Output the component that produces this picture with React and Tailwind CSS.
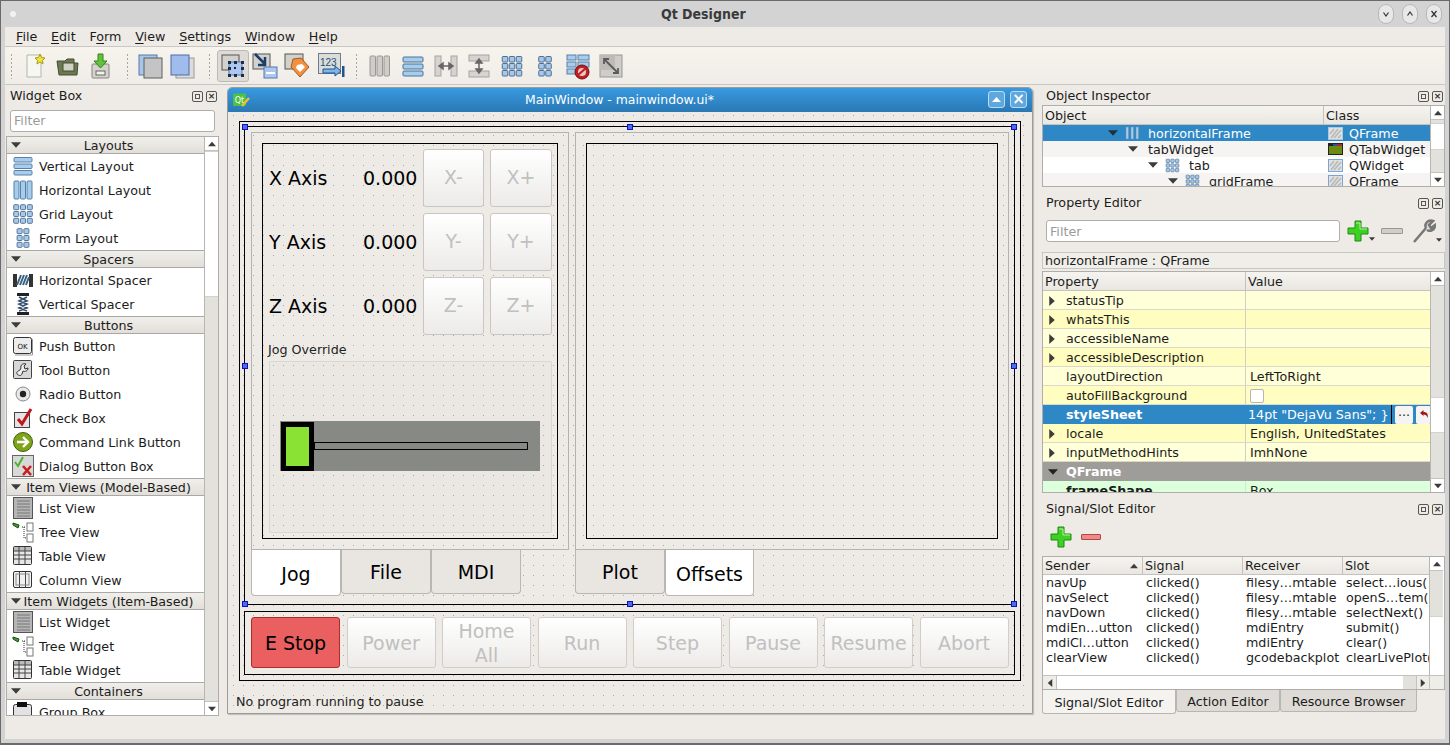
import React from 'react'

const DOTS = "bg-[radial-gradient(circle_at_0.5px_0.5px,#a8a8a8_0.6px,transparent_0.6px)] bg-[length:10px_10px]"

const Tri = ({ dir = 'down', color = '#3c3c3c', size = 9, className = '' }) => {
  const pts = { down: '0,2 9,2 4.5,7', up: '0,7 9,7 4.5,2', right: '2,0 7,4.5 2,9', left: '7,0 2,4.5 7,9' }
  return (
    <svg width={size} height={size} viewBox="0 0 9 9" className={`shrink-0 ${className}`}>
      <polygon points={pts[dir]} fill={color} />
    </svg>
  )
}

// layout style icons
const Bars = ({ vertical, size = 22, fill = '#a5cdf0', stroke = '#5b7fa5' }) => (
  <svg width={size} height={size} viewBox="0 0 22 22" className="shrink-0">
    {[0, 1, 2].map((i) =>
      vertical
        ? <rect key={i} x={2 + i * 6.5} y="2" width="5" height="18" rx="1" fill={fill} stroke={stroke} />
        : <rect key={i} x="2" y={2.5 + i * 6.5} width="18" height="4.5" rx="1" fill={fill} stroke={stroke} />
    )}
  </svg>
)

const Cells = ({ cols = 3, rows = 3, size = 22, cell = 5, gap = 1.8 }) => {
  const w = cols * cell + (cols - 1) * gap
  const h = rows * cell + (rows - 1) * gap
  const out = []
  for (let r = 0; r < rows; r++) {
    for (let c = 0; c < cols; c++) {
      out.push(
        <rect key={`${r}${c}`} x={(22 - w) / 2 + c * (cell + gap)} y={(22 - h) / 2 + r * (cell + gap)} width={cell} height={cell}
          rx="0.8" fill="#a9c8e6" stroke="#54789c" strokeWidth="1" />
      )
    }
  }
  return <svg width={size} height={size} viewBox="0 0 22 22" className="shrink-0">{out}</svg>
}

const Box = ({ children }) => (
  <svg width="22" height="22" viewBox="0 0 22 22" className="shrink-0">{children}</svg>
)

const WidgetIcon = ({ name }) => {
  switch (name) {
    case 'vlayout': return <Bars />
    case 'hlayout': return <Bars vertical />
    case 'grid': return <Cells cell={5} />
    case 'form': return <Cells cols={2} cell={5} />
    case 'hspacer': return (
      <Box>
        <rect x="1" y="5" width="4" height="13" fill="#333" /><rect x="17" y="5" width="4" height="13" fill="#333" />
        <path d="M5 16L9 6M8 16L12 6M11 16L15 6M14 16L17 8" stroke="#3c6080" strokeWidth="2" />
      </Box>
    )
    case 'vspacer': return (
      <Box>
        <rect x="5" y="0" width="12" height="3" fill="#222" /><rect x="5" y="19" width="12" height="3" fill="#222" />
        <path d="M7 4L15 8L7 11L15 15L7 18M15 4L7 8L15 11L7 15L15 18" stroke="#34506c" strokeWidth="1.6" fill="none" />
      </Box>
    )
    case 'push': return (
      <Box>
        <rect x="1.5" y="2.5" width="18" height="16" rx="2" fill="#ececec" stroke="#333" />
        <path d="M20.5 4V20H3" stroke="#999" fill="none" />
        <text x="10.5" y="13.5" textAnchor="middle" fontSize="7" fontFamily="DejaVu Sans" fill="#111">OK</text>
      </Box>
    )
    case 'tool': return (
      <Box>
        <rect x="1.5" y="1.5" width="18" height="18" rx="1" fill="#d8d8d8" stroke="#444" />
        <path d="M5 15c2 2 4 2 5 0l1-3c2 1 5 0 5-3l-3 1-1-3 2-2c-3-1-6 1-5 4l-1 2c-2 1-4 2-3 4z" fill="#eee" stroke="#333" />
      </Box>
    )
    case 'radio': return (
      <Box>
        <circle cx="11" cy="11" r="7" fill="#e8e8e8" stroke="#8a8a8a" />
        <circle cx="11" cy="11" r="3.2" fill="#222" />
      </Box>
    )
    case 'check': return (
      <Box>
        <rect x="2.5" y="5.5" width="15" height="15" fill="#e4e4e4" stroke="#444" />
        <path d="M6 12L10 17L19 2" stroke="#c0161c" strokeWidth="3" fill="none" />
      </Box>
    )
    case 'command': return (
      <Box>
        <circle cx="11" cy="11" r="9.5" fill="#7ea51a" stroke="#40600a" />
        <path d="M5 11H15M11 6L16 11L11 16" stroke="#fff" strokeWidth="2.4" fill="none" />
      </Box>
    )
    case 'dialog': return (
      <Box>
        <rect x="0.5" y="0.5" width="21" height="21" fill="#d8d8d8" stroke="#666" />
        <path d="M3 7L6 11L11 2" stroke="#4bb52c" strokeWidth="2" fill="none" />
        <path d="M11 11L19 20M19 11L11 20" stroke="#cc1c1c" strokeWidth="2.6" />
      </Box>
    )
    case 'list': return (
      <Box>
        <rect x="1.5" y="0.5" width="19" height="21" fill="#b5b5b5" stroke="#555" />
        {[4, 7, 10, 13, 16, 19].map((y) => <path key={y} d={`M5 ${y}H18`} stroke="#777" />)}
      </Box>
    )
    case 'tree': return (
      <Box>
        <path d="M1 2L7 4L6 7L1 4z" fill="#3da02c" stroke="#1c4c12" />
        <path d="M10 6H13M12 6V17H15" stroke="#333" strokeDasharray="1 1" fill="none" />
        <rect x="15" y="2" width="6" height="8" fill="#fff" stroke="#777" />
        <rect x="15" y="13" width="6" height="8" fill="#fff" stroke="#777" />
      </Box>
    )
    case 'table': return (
      <Box>
        <rect x="1.5" y="1.5" width="18" height="18" rx="1" fill="#e6e6e6" stroke="#333" />
        <rect x="2" y="2" width="17" height="4" fill="#bbb" />
        <path d="M2 6H19M2 10H19M2 14H19M7 2V19M13 2V19" stroke="#444" />
      </Box>
    )
    case 'column': return (
      <Box>
        <rect x="1.5" y="2.5" width="18" height="16" rx="1.5" fill="#f2f2f2" stroke="#333" />
        <path d="M7.5 3V18M13.5 3V18" stroke="#444" />
        <rect x="4" y="5" width="13" height="11" fill="none" stroke="#888" />
      </Box>
    )
    case 'group': return (
      <Box>
        <rect x="1.5" y="3.5" width="18" height="20" rx="2" fill="#e2e2e2" stroke="#333" />
        <rect x="5" y="1" width="10" height="5" fill="#111" />
      </Box>
    )
    default: return null
  }
}

const SECTIONS = [
  { title: 'Layouts', items: [['Vertical Layout', 'vlayout'], ['Horizontal Layout', 'hlayout'], ['Grid Layout', 'grid'], ['Form Layout', 'form']] },
  { title: 'Spacers', items: [['Horizontal Spacer', 'hspacer'], ['Vertical Spacer', 'vspacer']] },
  { title: 'Buttons', items: [['Push Button', 'push'], ['Tool Button', 'tool'], ['Radio Button', 'radio'], ['Check Box', 'check'], ['Command Link Button', 'command'], ['Dialog Button Box', 'dialog']] },
  { title: 'Item Views (Model-Based)', items: [['List View', 'list'], ['Tree View', 'tree'], ['Table View', 'table'], ['Column View', 'column']] },
  { title: 'Item Widgets (Item-Based)', items: [['List Widget', 'list'], ['Tree Widget', 'tree'], ['Table Widget', 'table']] },
  { title: 'Containers', items: [['Group Box', 'group']] },
]

const Scrollbar = ({ before = 0, thumb = 0 }) => (
  <div className="w-[14px] shrink-0 flex flex-col border-l border-[#b8b6b2] bg-[#e3e1dc]">
    <div className="h-[14px] bg-white border-b border-[#c4c2be] flex items-center justify-center shrink-0"><Tri dir="up" size={8} /></div>
    <div style={{ height: before }} className="shrink-0" />
    <div style={{ height: thumb }} className="shrink-0 bg-white border-y border-[#d4d2ce]" />
    <div className="flex-1" />
    <div className="h-[14px] bg-white border-t border-[#c4c2be] flex items-center justify-center shrink-0"><Tri dir="down" size={8} /></div>
  </div>
)

const DockTitle = ({ title, className = '' }) => (
  <div className={`h-[20px] pt-[2px] flex items-center justify-between shrink-0 ${className}`}>
    <span>{title}</span>
    <span className="flex gap-[3px]">
      <span className="w-[11px] h-[11px] border border-[#555] rounded-[2px] flex items-center justify-center">
        <span className="w-[5px] h-[5px] border border-[#555]" />
      </span>
      <span className="w-[11px] h-[11px] border border-[#555] rounded-[2px] flex items-center justify-center text-[9px] leading-none font-bold text-[#333]">×</span>
    </span>
  </div>
)

const Filter = ({ className }) => (
  <div className={`h-[22px] bg-white border border-[#b0aeaa] rounded-[3px] pl-[3px] flex items-center text-[#9a9a9a] ${className}`}>Filter</div>
)

const Menu = ({ pre = '', u, post }) => (
  <span>{pre}<span className="underline underline-offset-2">{u}</span>{post}</span>
)

const Grip = ({ className = '' }) => (
  <div className={`w-[3px] h-[26px] shrink-0 bg-[radial-gradient(circle,#a8a6a2_0.8px,transparent_0.9px)] bg-[length:3px_4px] ${className}`} />
)

const Tile = ({ x, y, fill, stroke = '#6d6d6d', w = 18, h = 20 }) => (
  <rect x={x} y={y} width={w} height={h} fill={fill} stroke={stroke} />
)

const Tool = ({ children, active, className = '' }) => (
  <div className={`w-[32px] h-[32px] shrink-0 flex items-center justify-center rounded-[3px] ${active ? 'bg-[#dedbd6] border border-[#bcbab6]' : ''} ${className}`}>
    <svg width="28" height="28" viewBox="0 0 28 28">{children}</svg>
  </div>
)

const CellsRaw = ({ cols }) => {
  const cell = 5.5
  const w = cols * cell + (cols - 1) * 1.5
  const out = []
  for (let r = 0; r < 3; r++) {
    for (let c = 0; c < cols; c++) {
      out.push(<rect key={`${r}${c}`} x={(28 - w) / 2 + c * 7} y={4.5 + r * 7} width={cell} height={cell} rx="0.8" fill="#a9c8e6" stroke="#4c6f96" />)
    }
  }
  return <g>{out}</g>
}

const Toolbar = () => (
  <div className="h-[39px] shrink-0 flex items-center pl-[5px] bg-linear-to-b from-[#f7f4ee] to-[#f0ede8] border-y border-[#c9c7c3]">
    <Grip />
    <div className="flex ml-[6px]">
      <Tool>
        <path d="M6 3H20V25H6z" fill="#f6f6f2" stroke="#b5b5b0" />
        <path d="M19 2L20.5 5.5L24 6L21.5 8.5L22 12L19 10L16 12L16.5 8.5L14 6L17.5 5.5z" fill="#f3e23a" stroke="#a79a1a" />
      </Tool>
      <Tool className="ml-[1px]">
        <path d="M3 9H11L13 7H20V11H24L23 23H5z" fill="#6b7852" stroke="#444e32" />
        <rect x="9" y="11" width="11" height="8" fill="#d0d2c6" stroke="#444e32" />
      </Tool>
      <Tool>
        <rect x="6" y="12" width="17" height="14" rx="1" fill="#d4d4cc" stroke="#86867e" />
        <rect x="10" y="19" width="9" height="4" fill="#f2f2ec" stroke="#666" />
        <path d="M12 2H17V9H21L14.5 16L8 9H12z" fill="#62c23c" stroke="#32801e" />
      </Tool>
    </div>
    <Grip className="ml-[10px]" />
    <div className="flex ml-[5px]">
      <Tool>
        <Tile x="3" y="3" fill="#a8c6ec" stroke="#5878a8" />
        <Tile x="8" y="6" fill="#c4c4c4" stroke="#5e5e5e" />
      </Tool>
      <Tool>
        <Tile x="8" y="6" fill="#dcdcdc" stroke="#9a9a9a" />
        <Tile x="3" y="3" fill="#a0bcec" stroke="#4c6ca8" />
      </Tool>
    </div>
    <Grip className="ml-[10px]" />
    <div className="flex ml-[6px]">
      <Tool active>
        <rect x="3" y="3" width="17" height="15" fill="#d2d2cc" stroke="#555" />
        <rect x="10" y="10" width="13" height="13" fill="#acc8f2" stroke="#5878a8" />
        {[[9, 9], [22, 9], [9, 22], [22, 22], [15, 9], [15, 22], [9, 15], [22, 15]].map(([x, y], i) => <rect key={i} x={x} y={y} width="3" height="3" fill="#1c2c4c" />)}
        <rect x="15" y="15" width="2" height="2" fill="#222" />
      </Tool>
      <Tool>
        <rect x="2" y="2" width="17" height="15" fill="#d2d2cc" stroke="#555" />
        <rect x="13" y="15" width="13" height="11" fill="#acc8f2" stroke="#5878a8" />
        <rect x="15" y="20" width="9" height="2" fill="#fff" />
        <path d="M4 2L14 12M14 5V13H7" stroke="#1c3c6c" strokeWidth="2.5" fill="none" />
      </Tool>
      <Tool>
        <rect x="2" y="2" width="18" height="15" fill="#d2d2cc" stroke="#555" />
        <path d="M10 7L18 6L26 15L17 25L8 15z" fill="#f09040" stroke="#a85a1c" />
        <path d="M14 13L19 12L22 15L17 20L13 16z" fill="#fff" />
      </Tool>
      <Tool className="ml-[2px]">
        <rect x="1.5" y="1.5" width="22" height="20" fill="#dcdcd8" stroke="#6a7c98" />
        <text x="3" y="14" fontSize="10" fontFamily="Liberation Sans" fill="#24527c">123</text>
        <path d="M6 17H18V14L24 19L18 24V21H6z" fill="#7eb4ec" stroke="#205488" />
        <rect x="25" y="14" width="2.5" height="11" fill="#205488" />
      </Tool>
    </div>
    <Grip className="ml-[8px]" />
    <div className="flex ml-[6px] gap-[1px]">
      <Tool>
        {[0, 1, 2].map((i) => <rect key={i} x={4 + i * 7} y="4" width="5.5" height="20" rx="1" fill="#cfcdc9" stroke="#9a9894" />)}
      </Tool>
      <Tool>
        {[0, 1, 2].map((i) => <rect key={i} x="4" y={5 + i * 7} width="20" height="5" rx="1" fill="#a5cdf0" stroke="#4c7094" />)}
      </Tool>
      <Tool>
        <rect x="3" y="4" width="6" height="20" fill="#d6d4d0" stroke="#a5a39f" />
        <rect x="19" y="4" width="6" height="20" fill="#d6d4d0" stroke="#a5a39f" />
        <path d="M8 14H20M11 11L7 14L11 17zM17 11L21 14L17 17z" stroke="#666" fill="#666" strokeWidth="1.5" />
      </Tool>
      <Tool>
        <rect x="4" y="3" width="20" height="6" fill="#d6d4d0" stroke="#a5a39f" />
        <rect x="4" y="19" width="20" height="6" fill="#d6d4d0" stroke="#a5a39f" />
        <path d="M14 8V20M11 11L14 7L17 11zM11 17L14 21L17 17z" stroke="#666" fill="#666" strokeWidth="1.5" />
      </Tool>
      <Tool><CellsRaw cols={3} /></Tool>
      <Tool><CellsRaw cols={2} /></Tool>
      <Tool>
        <rect x="3" y="3" width="9" height="5" fill="#a5cdf0" stroke="#5b7fa5" />
        <rect x="14" y="3" width="11" height="5" fill="#a5cdf0" stroke="#5b7fa5" />
        <rect x="3" y="10" width="9" height="5" fill="#a5cdf0" stroke="#5b7fa5" />
        <rect x="14" y="10" width="11" height="5" fill="#a5cdf0" stroke="#5b7fa5" />
        <rect x="3" y="17" width="9" height="5" fill="#a5cdf0" stroke="#5b7fa5" />
        <circle cx="18" cy="20" r="7" fill="#c02020" stroke="#701010" />
        <circle cx="18" cy="20" r="4" fill="#e8c8c8" />
        <path d="M14 23L22 16" stroke="#c02020" strokeWidth="2.2" />
      </Tool>
      <Tool>
        <rect x="3" y="3" width="22" height="22" fill="#cfcdc9" stroke="#999793" />
        <rect x="3" y="3" width="15" height="15" fill="#bdbbb7" />
        <path d="M7 7L21 21M7 12V7H12M21 16V21H16" stroke="#5c5c5c" strokeWidth="1.8" fill="none" />
      </Tool>
    </div>
  </div>
)

const WidgetBox = () => (
  <div className="w-[220px] shrink-0 flex flex-col">
    <DockTitle title="Widget Box" className="pl-[5px] pr-[8px]" />
    <Filter className="ml-[5px] w-[205px] mt-[5px]" />
    <div className="ml-[1px] mt-[4px] w-[213px] h-[580px] flex border border-[#b0aeaa] overflow-hidden">
      <div className="flex-1 bg-white overflow-hidden">
        {SECTIONS.map((s, si) => (
          <div key={s.title}>
            <div className={`relative flex items-center justify-center pt-[2px] border-b border-[#aaa8a4] bg-linear-to-b from-[#f1efeb] to-[#e2dfda] ${si ? 'h-[18px] border-t' : 'h-[17px]'}`}>
              <span className="absolute left-[4px] top-[3px]"><Tri size={10} /></span>
              <span className="whitespace-nowrap pl-[6px]">{s.title}</span>
            </div>
            {s.items.map(([label, icon]) => (
              <div key={label} className="h-[24px] flex items-center pl-[5px] whitespace-nowrap">
                <WidgetIcon name={icon} />
                <span className="ml-[5px] pt-[2px]">{label}</span>
              </div>
            ))}
          </div>
        ))}
      </div>
      <Scrollbar before={0} thumb={146} />
    </div>
  </div>
)

const AxisButton = ({ label, wide }) => (
  <button className={`${wide ? 'w-[62px]' : 'w-[61px]'} h-[58px] pb-[1px] rounded-[3px] border border-[#c9c7c4] bg-linear-to-b from-white to-[#ecebe8] text-[#c0c0c0] text-[19px]`}>{label}</button>
)

const AxisRow = ({ axis }) => (
  <div className="flex items-center h-[58px]">
    <span className="w-[94px] text-[19px] text-black">{axis} Axis</span>
    <span className="w-[54px] text-[19px] text-black text-right">0.000</span>
    <div className="flex gap-[6px] ml-[6px]">
      <AxisButton label={`${axis}-`} />
      <AxisButton label={`${axis}+`} wide />
    </div>
  </div>
)

const Tab = ({ label, active, w = 'w-[90px]' }) => (
  <div className={`${w} flex items-center justify-center text-[19px] text-black border-[#b9b7b3] border-r border-b border-l rounded-b-[4px] ${active ? 'h-[46px] pt-[3px] bg-white' : 'h-[44px] pt-[1px] bg-[#e9e6e2]'}`}>{label}</div>
)

const ActionButton = ({ label, danger }) => (
  <button className={`w-[89px] h-[51px] leading-[24px] rounded-[3px] text-[19px] border ${danger ? 'bg-[#ea6060] border-[#b02a2a] text-black' : 'bg-linear-to-b from-white to-[#ecebe8] border-[#d0cecb] text-[#c0c0c0]'}`}>{label}</button>
)

const Handle = ({ className }) => (
  <span className={`absolute w-[6px] h-[6px] bg-[#4a6ee8] border border-[#1010c0] ${className}`} />
)

const FormWindow = () => (
  <div className="flex-1 pt-[2px] pl-[2px]">
    <div className="w-[806px] h-[627px] flex flex-col border border-[#9d9b98] rounded-t-[5px] overflow-hidden shadow-[1px_1px_1px_#bbb]">
      <div className="h-[24px] shrink-0 relative flex items-center justify-center text-white text-[12.4px] bg-linear-to-b from-[#389ae0] to-[#2a78b4]">
        <svg width="18" height="14" viewBox="0 0 18 14" className="absolute left-[5px] top-[5px]">
          <rect x="0" y="0.5" width="13" height="12.5" rx="1.5" fill="#50c040" />
          <text x="6.5" y="10" textAnchor="middle" fontSize="8" fontFamily="DejaVu Sans" fill="#fff">Qt</text>
          <path d="M9 13L16 5" stroke="#e8c040" strokeWidth="2.4" />
        </svg>
        <span className="pr-[21px]">MainWindow - mainwindow.ui*</span>
        <span className="absolute right-[5px] top-[3px] flex gap-[5px]">
          <span className="w-[17px] h-[17px] rounded-[3px] bg-[#5fa8de] border border-[#bcdaf0] flex items-center justify-center"><Tri dir="up" color="#fff" /></span>
          <span className="w-[17px] h-[17px] rounded-[3px] bg-[#5fa8de] border border-[#bcdaf0] flex items-center justify-center text-white font-bold text-[15px] leading-none">×</span>
        </span>
      </div>
      <div className={`flex-1 flex flex-col pl-[11px] pt-[9px] ${DOTS} bg-[position:5px_3px]`}>
        <div className="w-[782px] h-[560px] border border-black pl-[4px] pt-[4px] flex flex-col">
          <div className="relative w-[771px] h-[479px] border border-black pl-[5px] pt-[5px] flex gap-[6px]">
            <Handle className="-left-[3px] -top-[3px]" />
            <Handle className="left-[382px] -top-[3px]" />
            <Handle className="-right-[3px] -top-[3px]" />
            <Handle className="-left-[3px] top-[236px]" />
            <Handle className="-right-[3px] top-[236px]" />
            <Handle className="-left-[3px] -bottom-[3px]" />
            <Handle className="left-[382px] -bottom-[3px]" />
            <Handle className="-right-[3px] -bottom-[3px]" />

            <div className="w-[318px] ml-[1px]">
              <div className="h-[418px] border border-[#b4b2ae] p-[10px]">
                <div className="h-[396px] border border-black pl-[6px] pt-[5px]">
                  <div className="flex flex-col gap-[6px]">
                    <AxisRow axis="X" />
                    <AxisRow axis="Y" />
                    <AxisRow axis="Z" />
                  </div>
                  <div className="h-[26px] text-[#222] pt-[5px] -ml-[1px]">Jog Override</div>
                  <div className={`w-[283px] h-[172px] border border-[#dad7d2] rounded-[2px] bg-[#ebe8e3] ${DOTS} bg-[position:3px_3px] pl-[10px] flex items-center`}>
                    <div className="w-[260px] h-[50px] mt-[-2px] bg-[#878a84] pl-[1px] flex items-end">
                      <div className="w-[33px] h-[49px] bg-[#8ae234] border-[5px] border-black" />
                      <div className="w-[214px] h-[8px] mb-[21px] border border-black bg-[#878a84]" />
                    </div>
                  </div>
                </div>
              </div>
              <div className="flex">
                <Tab label="Jog" active />
                <Tab label="File" />
                <Tab label="MDI" />
              </div>
            </div>

            <div className="w-[434px]">
              <div className="h-[418px] border border-[#b4b2ae] p-[10px]">
                <div className="h-[396px] border border-black" />
              </div>
              <div className="flex">
                <Tab label="Plot" />
                <Tab label="Offsets" active w="w-[89px]" />
              </div>
            </div>
          </div>
          <div className="w-[771px] h-[64px] mt-[6px] border border-black pl-[6px] pt-[5px] flex gap-[6.5px]">
            <ActionButton label="E Stop" danger />
            <ActionButton label="Power" />
            <ActionButton label={<>Home<br />All</>} />
            <ActionButton label="Run" />
            <ActionButton label="Step" />
            <ActionButton label="Pause" />
            <ActionButton label="Resume" />
            <ActionButton label="Abort" />
          </div>
        </div>
        <div className="mt-[11px] -ml-[3px] text-[#222]">No program running to pause</div>
      </div>
    </div>
  </div>
)

const TreeIcon = ({ kind }) => {
  if (kind === 'bars') return <svg width="14" height="14" viewBox="0 0 14 14" className="shrink-0">{[1, 6, 11].map((x) => <rect key={x} x={x} y="1" width="2.5" height="12" fill="#a9cbea" stroke="#6a8fb0" strokeWidth="0.5" />)}</svg>
  return <Cells size={15} />
}

const ClassIcon = ({ kind }) => {
  if (kind === 'tab') return (
    <svg width="15" height="12" viewBox="0 0 15 12" className="shrink-0">
      <rect x="0.5" y="0.5" width="14" height="11" fill="#6a8a10" stroke="#222" />
      <rect x="1" y="1" width="4" height="2" fill="#222" /><rect x="5" y="1" width="4" height="2" fill="#3050a0" /><rect x="9" y="1" width="5" height="2" fill="#a03030" />
    </svg>
  )
  return (
    <svg width="15" height="13" viewBox="0 0 15 13" className="shrink-0">
      <rect x="0.5" y="0.5" width="14" height="12" fill="#e0e0e0" stroke={kind === 'sel' ? '#a8c8e4' : '#7ba6d2'} />
      <path d="M3 11L10 2M6 11L13 3M2 7L6 2M10 11L13 8" stroke="#b8b8b8" strokeWidth="1.5" />
    </svg>
  )
}

const TREE = [
  { pad: 65, icon: 'bars', gap: 9, label: 'horizontalFrame', cls: 'QFrame', kind: 'sel', bg: 'bg-[#2f88c6] text-white' },
  { pad: 85, gap: 10, label: 'tabWidget', cls: 'QTabWidget', kind: 'tab', bg: 'bg-[#f5f4f2]' },
  { pad: 105, icon: 'cells', gap: 9, label: 'tab', cls: 'QWidget', kind: 'w', bg: 'bg-white' },
  { pad: 125, icon: 'cells', gap: 9, label: 'gridFrame', cls: 'QFrame', kind: 'w', bg: 'bg-[#f5f4f2]' },
]

const ObjectInspector = () => (
  <div className="h-[82px] ml-[7px] flex border border-[#b0aeaa] overflow-hidden">
    <div className="flex-1 min-w-0 bg-white">
      <div className="h-[19px] flex border-b border-[#c4c2be] bg-linear-to-b from-[#f6f4f0] to-[#eae7e2]">
        <span className="w-[281px] pl-[2px] border-r border-[#c4c2be]">Object</span>
        <span className="pl-[2px]">Class</span>
      </div>
      {TREE.map((r) => (
        <div key={r.label} className={`h-[16px] flex items-center ${r.bg}`}>
          <div className="w-[281px] flex items-center shrink-0" style={{ paddingLeft: r.pad }}>
            <Tri color={r.kind === 'sel' ? '#22303c' : '#3c3c3c'} size={10} />
            {r.icon && <span className="ml-[7px]"><TreeIcon kind={r.icon} /></span>}
            <span className="pt-[2px]" style={{ marginLeft: r.gap }}>{r.label}</span>
          </div>
          <div className="flex items-center pl-[4px] gap-[6px] whitespace-nowrap"><ClassIcon kind={r.kind} /><span className="pt-[2px]">{r.cls}</span></div>
        </div>
      ))}
    </div>
    <Scrollbar before={3} thumb={27} />
  </div>
)

const PROPS = [
  ['statusTip', '', true, 0], ['whatsThis', '', true, 1], ['accessibleName', '', true, 0], ['accessibleDescription', '', true, 1],
  ['layoutDirection', 'LeftToRight', false, 0], ['autoFillBackground', 'check', false, 1],
]
const PROPS2 = [['locale', 'English, UnitedStates', true, 1], ['inputMethodHints', 'ImhNone', true, 0]]

const PropRow = ({ name, value, arrow, alt }) => (
  <div className={`h-[19px] flex border-b border-[#d9d8ca] ${alt ? 'bg-[#fffdbf]' : 'bg-[#ffffd8]'}`}>
    <div className="w-[203px] flex items-center pl-[4px] pt-[2px] border-r border-[#d0cfc2] shrink-0">
      <span className="w-[19px] shrink-0">{arrow && <Tri dir="right" size={10} />}</span>{name}
    </div>
    <div className="flex-1 flex items-center pl-[4px] pt-[2px]">
      {value === 'check' ? <span className="w-[14px] h-[14px] bg-white border border-[#b8b6b2] rounded-[2px]" /> : value}
    </div>
  </div>
)

const PropertyEditor = () => (
  <div className="h-[222px] mt-[2px] ml-[7px] flex border border-[#b0aeaa] overflow-hidden">
    <div className="flex-1 min-w-0 bg-white">
      <div className="h-[19px] flex border-b border-[#c4c2be] bg-linear-to-b from-[#f6f4f0] to-[#eae7e2]">
        <span className="w-[203px] pl-[2px] border-r border-[#c4c2be]">Property</span>
        <span className="pl-[2px]">Value</span>
      </div>
      {PROPS.map(([n, v, a, alt]) => <PropRow key={n} name={n} value={v} arrow={a} alt={alt} />)}
      <div className="h-[19px] flex bg-[#2f88c6] text-white">
        <div className="w-[203px] pl-[23px] font-bold flex items-center shrink-0">styleSheet</div>
        <div className="flex-1 flex items-center pl-[2px] gap-[3px]">
          <span className="w-[144px] whitespace-nowrap overflow-hidden border-r border-black">14pt "DejaVu Sans"; {'}'}</span>
          <span className="w-[18px] h-[18px] bg-[#f5f4f2] text-[#222] rounded-[2px] flex items-center justify-center leading-none pb-[4px]">...</span>
          <span className="w-[15px] h-[18px] bg-[#f5f4f2] rounded-[2px] flex items-center justify-center">
            <svg width="10" height="9" viewBox="0 0 10 9"><path d="M1 3L4.5 0V2C8 2 9.5 4 8.5 8C8 5.500 6.500 4.500 4.500 4.500V6z" fill="#a01818" /></svg>
          </span>
        </div>
      </div>
      {PROPS2.map(([n, v, a, alt]) => <PropRow key={n} name={n} value={v} arrow={a} alt={alt} />)}
      <div className="h-[19px] flex items-center pl-[5px] bg-[#9f9d9a] text-white font-bold">
        <span className="w-[18px]"><Tri size={10} color="#222" /></span>QFrame
      </div>
      <div className="h-[19px] flex bg-[#dcffdc]">
        <div className="w-[203px] pl-[23px] font-bold border-r border-[#cfe8cf] shrink-0">frameShape</div>
        <div className="pl-[4px]">Box</div>
      </div>
    </div>
    <Scrollbar before={111} thumb={36} />
  </div>
)

const CONNECTIONS = [
  ['navUp', 'clicked()', 'filesy…mtable', 'select…ious('],
  ['navSelect', 'clicked()', 'filesy…mtable', 'openS…tem('],
  ['navDown', 'clicked()', 'filesy…mtable', 'selectNext()'],
  ['mdiEn…utton', 'clicked()', 'mdiEntry', 'submit()'],
  ['mdiCl…utton', 'clicked()', 'mdiEntry', 'clear()'],
  ['clearView', 'clicked()', 'gcodebackplot', 'clearLivePlot('],
]

const Plus = ({ size = 22 }) => (
  <svg width={size} height={size} viewBox="0 0 22 22" className="shrink-0">
    <path d="M8 1H14V8H21V14H14V21H8V14H1V8H8z" fill="#3ed022" stroke="#1c8a10" />
    <path d="M9 3H13V9H20" stroke="#b4f29c" fill="none" />
  </svg>
)

const SlotEditor = () => (
  <div className="h-[134px] ml-[7px] flex flex-col border border-[#b0aeaa] overflow-hidden bg-white">
    <div className="flex-1 flex min-h-0">
      <div className="w-[386px] shrink-0">
        <div className="h-[18px] flex leading-[17px] border-b border-[#c4c2be] bg-linear-to-b from-[#f6f4f0] to-[#eae7e2]">
          <span className="w-[100px] pl-[2px] pr-[4px] border-r border-[#c4c2be] flex items-center justify-between">Sender <Tri dir="up" size={8} /></span>
          <span className="w-[100px] pl-[2px] border-r border-[#c4c2be]">Signal</span>
          <span className="w-[100px] pl-[2px] border-r border-[#c4c2be]">Receiver</span>
          <span className="pl-[2px]">Slot</span>
        </div>
        {CONNECTIONS.map((row) => (
          <div key={row[0]} className="h-[15px] flex items-center whitespace-nowrap overflow-hidden">
            {row.map((c, i) => <span key={i} className={`${i === 3 ? 'w-[86px]' : 'w-[100px]'} shrink-0 pl-[3px] overflow-hidden`}>{c}</span>)}
          </div>
        ))}
      </div>
      <Scrollbar before={45} thumb={60} />
    </div>
    <div className="h-[14px] shrink-0 flex border-t border-[#c4c2be] bg-[#efede8]">
      <div className="w-[14px] flex items-center justify-center border-r border-[#c4c2be]"><Tri dir="left" size={8} /></div>
      <div className="w-[346px] bg-white" />
      <div className="w-[13px] bg-[#e3e1dc]" />
      <div className="w-[14px] flex items-center justify-center border-x border-[#c4c2be]"><Tri dir="right" size={8} /></div>
    </div>
  </div>
)

const BottomTab = ({ label, active, w }) => (
  <div style={{ width: w }} className={`flex items-center justify-center pt-[2px] rounded-b-[3px] border border-t-0 border-[#b8b6b2] shrink-0 ${active ? 'h-[24px] bg-[#f5f3ef]' : 'h-[22px] bg-[#dedbd6]'}`}>{label}</div>
)

const RightDock = () => (
  <div className="flex-1 flex flex-col min-w-0">
    <DockTitle title="Object Inspector" className="pl-[11px] pr-[2px]" />
    <ObjectInspector />
    <DockTitle title="Property Editor" className="pl-[11px] pr-[2px] mt-[5px]" />
    <div className="mt-[8px] pl-[11px] flex items-center h-[22px]">
      <Filter className="w-[294px] pt-[2px]" />
      <span className="ml-[7px] flex items-end"><Plus /><Tri size={6} /></span>
      <span className="ml-[6px] w-[22px] h-[6px] bg-[#d0ceca] border border-[#9a9894] rounded-[1px]" />
      <span className="ml-[9px] flex items-end">
        <svg width="24" height="24" viewBox="0 0 24 24"><path d="M2 23L14 9M14 9C12 5 16 0 21 2L17 6L19 9L23 6C23 11 18 13 15 11" stroke="#777" strokeWidth="2.5" fill="#ddd" /></svg>
        <Tri size={6} />
      </span>
    </div>
    <div className="mt-[10px] ml-[7px] h-[17px] border border-[#c8c6c2] flex items-center pl-[2px] bg-[#f0eee9] shrink-0">horizontalFrame : QFrame</div>
    <PropertyEditor />
    <DockTitle title="Signal/Slot Editor" className="pl-[11px] pr-[2px] mt-[5px]" />
    <div className="h-[38px] flex items-center pl-[15px] shrink-0 gap-[9px]">
      <Plus />
      <span className="w-[20px] h-[6px] bg-[#f08a8a] border border-[#b04848] rounded-[1px]" />
    </div>
    <SlotEditor />
    <div className="ml-[7px] flex items-start">
      <BottomTab label="Signal/Slot Editor" active w={134} />
      <BottomTab label="Action Editor" w={104} />
      <BottomTab label="Resource Browser" w={137} />
    </div>
  </div>
)

const TitleCircle = ({ children }) => (
  <span className="w-[16px] h-[20px] rounded-full bg-[#e8e8e8] border border-[#b8b8b8] flex items-center justify-center">
    <svg width="8" height="8" viewBox="0 0 8 8" fill="none" stroke="#333" strokeWidth="1.2">{children}</svg>
  </span>
)

const App = () => {
  return (
    <div className="w-[1450px] h-[745px] overflow-hidden flex flex-col bg-[#d3d3d3] border border-b-2 border-[#6a6a6a] px-[4px] pb-[4px] font-['DejaVu_Sans',sans-serif] text-[12.7px] text-[#1c1c1c]">
      <div className="h-[26px] shrink-0 flex items-center relative pl-[656px] text-[14px] font-bold text-[#3a3a3a] font-['DejaVu_Sans_Condensed','DejaVu_Sans',sans-serif]">
        <span className="absolute left-[5px] top-[10px] w-[6px] h-[6px] rounded-full bg-[#f2f2f2]" />
        Qt Designer
        <span className="absolute right-[3px] top-[3px] flex gap-[8px]">
          <TitleCircle><path d="M1.5 2.5L4 6L6.5 2.5" /></TitleCircle>
          <TitleCircle><path d="M1.5 5.5L4 2L6.5 5.5" /></TitleCircle>
          <TitleCircle><path d="M1.5 1L6.5 7M6.5 1L1.5 7" /></TitleCircle>
        </span>
      </div>
      <div className="h-[19px] shrink-0 flex items-center gap-[13.8px] pl-[11px] bg-[#eeebe6]">
        <Menu u="F" post="ile" />
        <Menu u="E" post="dit" />
        <Menu pre="F" u="o" post="rm" />
        <Menu u="V" post="iew" />
        <Menu u="S" post="ettings" />
        <Menu u="W" post="indow" />
        <Menu u="H" post="elp" />
      </div>
      <Toolbar />
      <div className="flex-1 flex min-h-0 bg-[#eeebe6]">
        <WidgetBox />
        <div className="w-[810px] shrink-0 flex"><FormWindow /></div>
        <RightDock />
      </div>
    </div>
  )
}

export default App
